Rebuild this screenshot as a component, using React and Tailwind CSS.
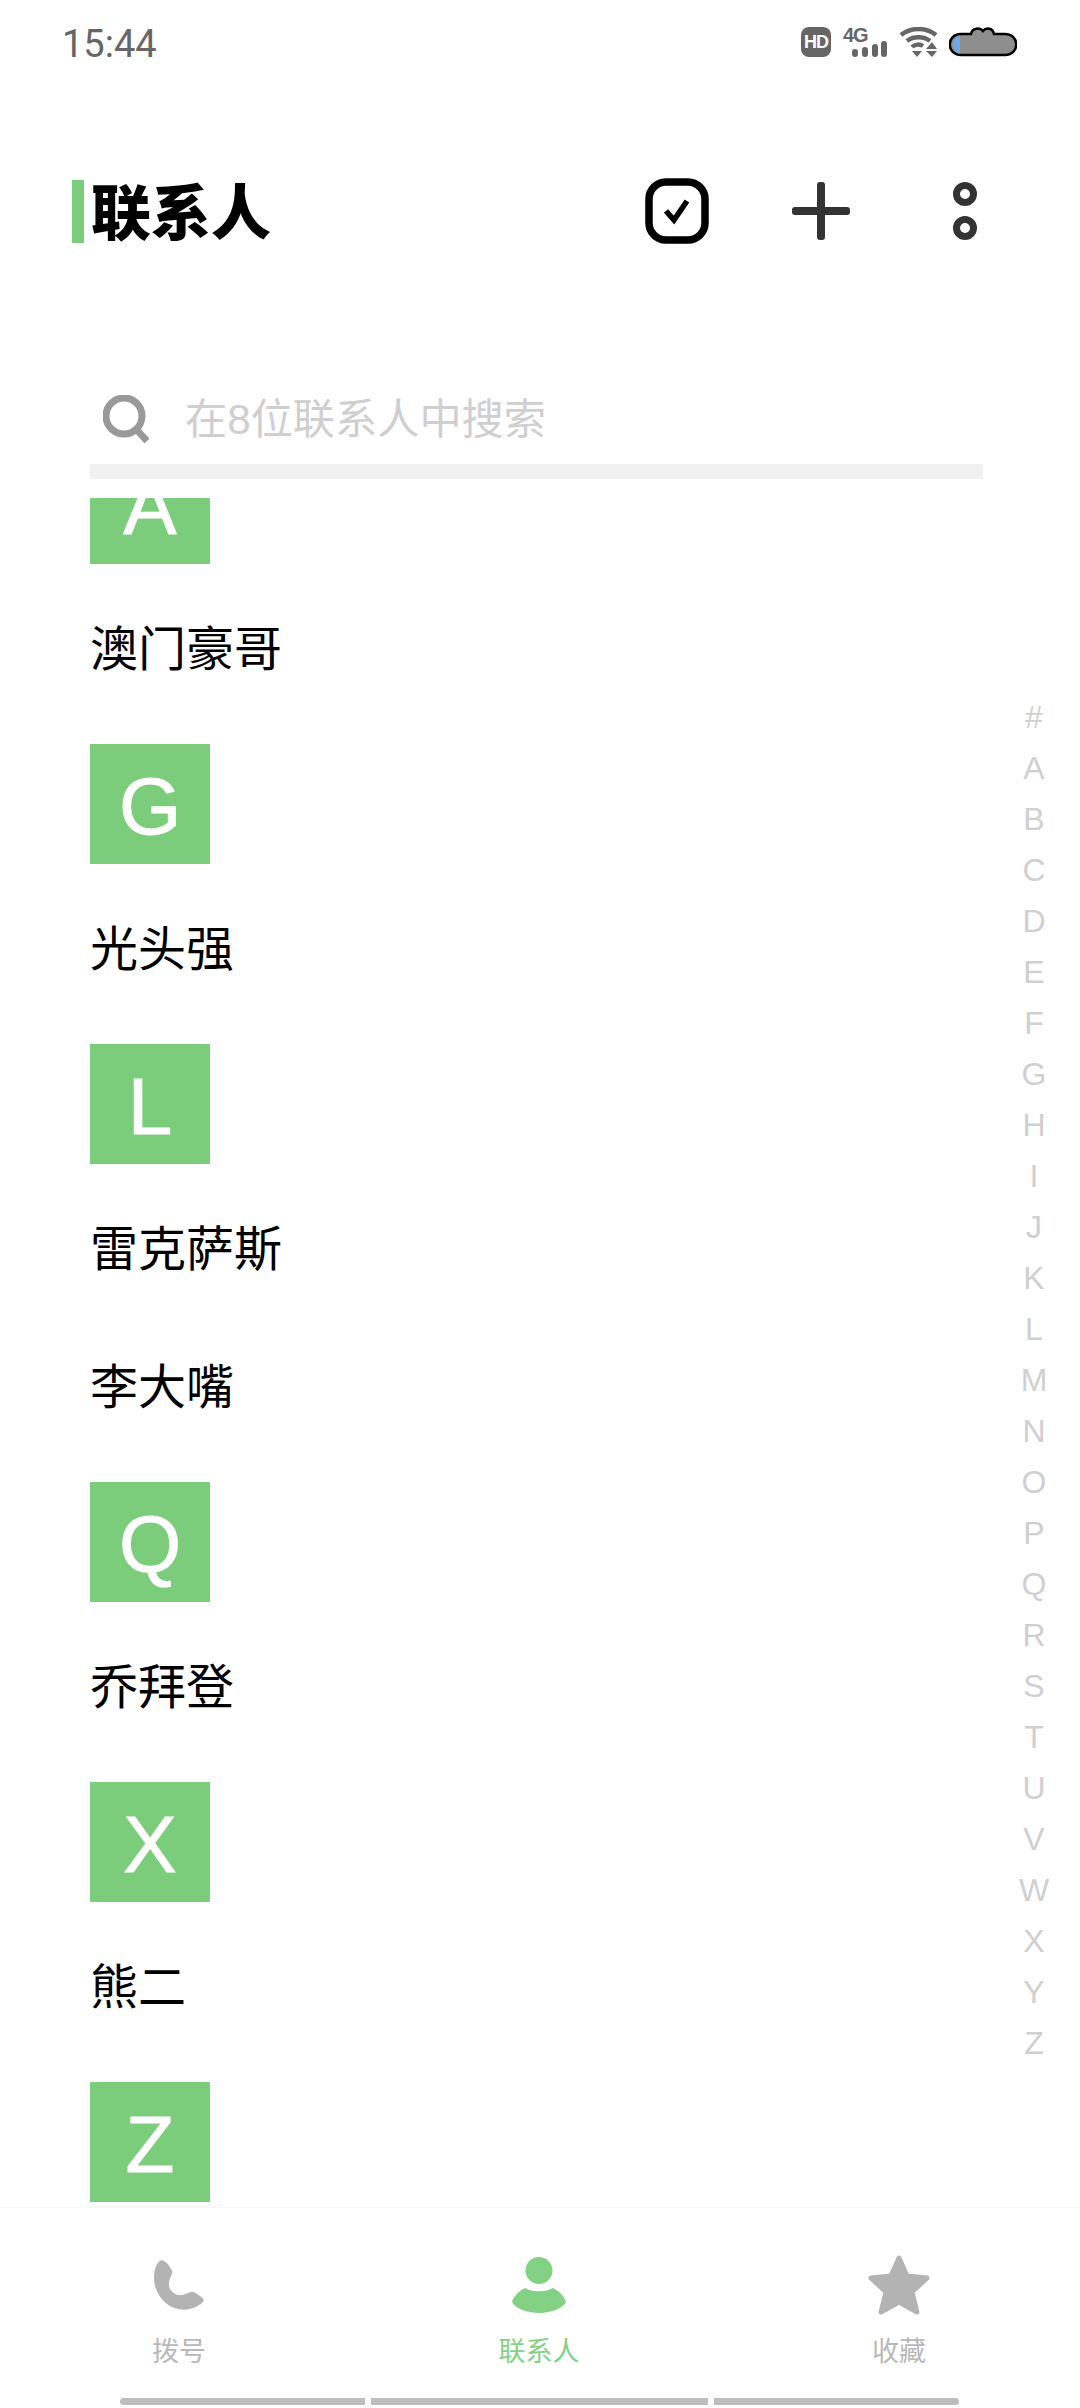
const sans = 'font-["Liberation_Sans","Noto_Sans_CJK_SC",sans-serif]';

const sections = [
    { letter: 'A', names: ['澳门豪哥'] },
    { letter: 'G', names: ['光头强'] },
    { letter: 'L', names: ['雷克萨斯', '李大嘴'] },
    { letter: 'Q', names: ['乔拜登'] },
    { letter: 'X', names: ['熊二'] },
    { letter: 'Z', names: [] },
];

const indexLetters = '#ABCDEFGHIJKLMNOPQRSTUVWXYZ'.split('');

const StatusIcons = () => (
    <div className="flex items-start">
        <div className="w-[30px] h-[30px] rounded-[8px] bg-[#666] flex items-center justify-center text-white text-[18px] leading-none font-bold tracking-[-1px]">
            HD
        </div>
        <div className="relative ml-[12px] w-[44px] h-[30px]">
            <span className="absolute left-0 top-[-2px] text-[#666] text-[20px] leading-[20px] font-bold tracking-[-1px]">4G</span>
            <svg className="absolute left-[9px] top-[14px]" width="35" height="16" viewBox="0 0 35 16" fill="#666">
                <rect x="0" y="8" width="6" height="8" rx="3" />
                <rect x="10" y="6" width="6" height="10" rx="3" />
                <rect x="20" y="3" width="6" height="13" rx="3" />
                <rect x="29" y="0" width="6" height="16" rx="3" />
            </svg>
        </div>
        <svg className="ml-[12px]" width="39" height="30" viewBox="0 0 39 30" fill="none">
            <path d="M2 8 C12 0 27 0 37 8" stroke="#666" strokeWidth="4.5" />
            <path d="M8 14 C14 9 25 9 31 14" stroke="#666" strokeWidth="4.5" />
            <path d="M13 20 C16 17 21 17 24 19" stroke="#666" strokeWidth="4.5" />
            <path d="M13 24 L23 24 L18 30 Z" fill="#666" />
            <path d="M33 15 L38 22 L27 22 Z" fill="#666" />
            <path d="M27 24 L38 24 L33 30 Z" fill="#666" />
        </svg>
        <svg className="ml-[11px]" width="68" height="30" viewBox="0 0 68 30" fill="none">
            <path d="M12 7 H22 C23 1 31 0 34 4 C37 0 44 1 45 7 H56 C71 7 71 28 56 28 H12 C-3 28 -3 7 12 7 Z" fill="#8e8e8e" stroke="#000" strokeWidth="2.5" />
            <path d="M11 8.5 C2 9 2 26 11 26.5 Z" fill="#6aa8ec" />
        </svg>
    </div>
);

const PhoneIcon = () => (
    <svg width="50" height="50" viewBox="100 92 151 149" fill="#b3b3b3">
        <path d="M122 92 C135 92 148 110 155 125 C158 132 145 145 145 165 C146 185 165 200 185 197 C197 195 205 187 215 187 C228 190 245 203 251 212 C245 228 215 241 190 241 C140 241 100 195 100 145 C100 120 110 95 122 92 Z" />
    </svg>
);

const PersonIcon = () => (
    <svg width="54" height="56" viewBox="70 82 160 166" fill="#83d183">
        <circle cx="150" cy="122" r="40" />
        <path d="M110 174 C125 187 175 187 190 174 C205 178 225 198 230 215 C222 235 185 248 150 248 C115 248 78 235 70 215 C75 198 95 178 110 174 Z" />
    </svg>
);

const StarIcon = () => (
    <svg width="62" height="60" viewBox="0 0 62 60" fill="#b3b3b3" stroke="#b3b3b3" strokeWidth="5" strokeLinejoin="round">
        <path d="M31 3 L39 21 L59 23 L44 37 L49 57 L31 47 L13 57 L18 37 L3 23 L23 21 Z" />
    </svg>
);

const TabItem = ({ icon, label, active }) => (
    <div className="w-[200px] flex flex-col items-center">
        <div className="h-[60px] flex items-center justify-center">{icon}</div>
        <span className={`mt-[19px] text-[27px] leading-[36px] ${active ? 'text-[#83d183]' : 'text-[#b8b8b8]'}`}>{label}</span>
    </div>
);

export default function App() {
    return (
        <div className={`relative w-[1080px] h-[2408px] bg-white overflow-hidden flex flex-col ${sans}`}>
            {/* status bar */}
            <div className="h-[88px] pl-[62px] pr-[63px] pt-[27px] flex justify-between items-start shrink-0">
                <span className="text-[38px] leading-[34px] text-[#666] font-['Roboto',sans-serif]">15:44</span>
                <StatusIcons />
            </div>

            {/* header */}
            <div className="mt-[63px] h-[120px] pl-[72px] flex items-center shrink-0">
                <div className="w-[12px] h-[63px] bg-[#7bcd7b]" />
                <h1 className="ml-[7px] -mt-[5px] w-[180px] text-[60px] leading-none font-black text-black font-['Noto_Sans_CJK_SC',sans-serif]">联系人</h1>
                <svg className="ml-[374px]" width="64" height="66" viewBox="0 0 64 66" fill="none">
                    <rect x="4" y="4" width="56" height="58" rx="17" stroke="#000" strokeWidth="7.5" />
                    <path d="M21 33 L29 42 L42 23" stroke="#000" strokeWidth="5.5" />
                </svg>
                <svg className="ml-[82px]" width="60" height="60" viewBox="0 0 60 60" fill="#333">
                    <rect x="26" y="1" width="8" height="58" rx="3" />
                    <rect x="1" y="26" width="58" height="8" rx="3" />
                </svg>
                <svg className="ml-[101px]" width="26" height="60" viewBox="0 0 26 60" fill="none" stroke="#333" strokeWidth="7">
                    <circle cx="13" cy="13" r="8.5" />
                    <circle cx="13" cy="47" r="8.5" />
                </svg>
            </div>

            {/* search */}
            <div className="mt-[103px] h-[90px] pl-[103px] flex items-center shrink-0">
                <svg width="46" height="48" viewBox="0 0 46 48" fill="none" stroke="#999" strokeWidth="7">
                    <circle cx="21" cy="21" r="18" />
                    <path d="M33 34 L44 46" />
                </svg>
                <span className="ml-[36px] mt-[2px] text-[42.2px] leading-none text-[#cfcfcf]">在8位联系人中搜索</span>
            </div>
            <div className="ml-[90px] w-[893px] h-[15px] bg-[#f0f0f0] shrink-0" />

            {/* list */}
            <div className="mt-[19px] mb-[5px] flex-1 min-h-0 overflow-hidden">
                <div className="-mt-[54px] pl-[90px]">
                    {sections.map((section) => (
                        <div key={section.letter}>
                            <div className="w-[120px] h-[120px] pt-[6px] bg-[#7bcd7b] flex items-center justify-center text-white text-[80px] leading-none [-webkit-text-stroke:1px_white]">
                                {section.letter}
                            </div>
                            <div className="pt-[17px] pb-[25px]">
                                {section.names.map((name) => (
                                    <div key={name} className="h-[138px] flex items-center text-[48px] leading-none text-black">
                                        {name}
                                    </div>
                                ))}
                            </div>
                        </div>
                    ))}
                </div>
            </div>

            {/* bottom tabs */}
            <div className="h-[201px] border-t border-[#f7f7f7] shrink-0 flex flex-col">
                <div className="pt-[47px] pl-[79px] pr-[81px] flex justify-between">
                    <TabItem icon={<PhoneIcon />} label="拨号" />
                    <TabItem icon={<PersonIcon />} label="联系人" active />
                    <TabItem icon={<StarIcon />} label="收藏" />
                </div>
                <div className="mt-auto mb-[3px] px-[120px] flex gap-[6px]">
                    <div className="w-[245px] h-[7px] rounded-l-[4px] bg-[#bdbdbd]" />
                    <div className="w-[337px] h-[7px] bg-[#bdbdbd]" />
                    <div className="w-[245px] h-[7px] rounded-r-[4px] bg-[#bdbdbd]" />
                </div>
            </div>

            {/* alphabet index */}
            <div className="absolute left-[994px] top-[691px] w-[80px] flex flex-col items-center">
                {indexLetters.map((l) => (
                    <span key={l} className="h-[51px] flex items-center text-[32px] leading-none text-[#d0d0d0]">{l}</span>
                ))}
            </div>
        </div>
    );
}
